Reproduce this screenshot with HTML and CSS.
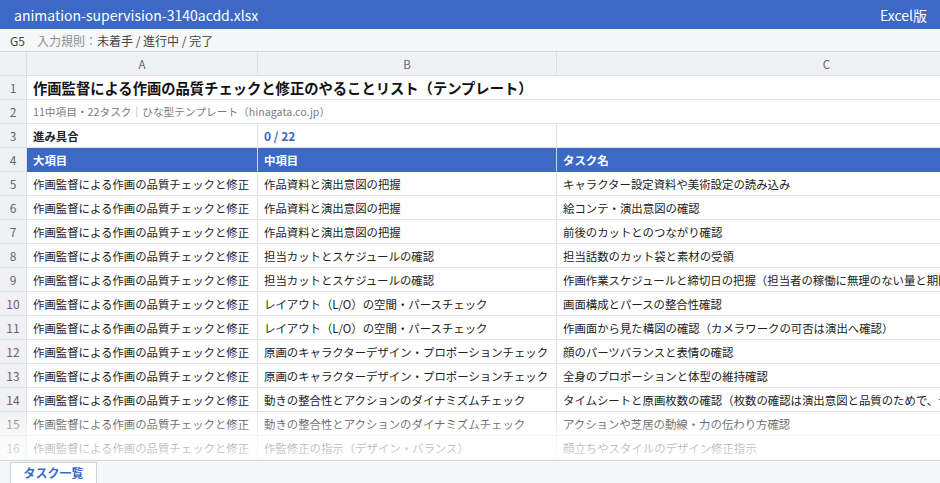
FILE: index.html
```html
<!DOCTYPE html>
<html lang="ja">
<head>
  <meta charset="UTF-8" />
  <title>animation-supervision-3140acdd.xlsx</title>
  <link rel="stylesheet" href="styles.css">
</head>
<body>
  <div class="app">
    <!-- Title bar -->
    <header class="topbar">
      <span class="file-name">animation-supervision-3140acdd.xlsx</span>
      <span class="edition">Excel版</span>
    </header>

    <!-- Formula bar -->
    <div class="formula-bar">
      <span class="cell-ref">G5</span>
      <span class="rule-label">入力規則：</span><span class="rule-value">未着手 / 進行中 / 完了</span>
    </div>

    <!-- Sheet -->
    <div class="sheet-wrap">
      <div class="sheet">
        <div class="corner"></div>
        <div class="col-head">A</div>
        <div class="col-head">B</div>
        <div class="col-head">C</div>

        <div class="row-num">1</div>
        <div class="cell title span-all">作画監督による作画の品質チェックと修正のやることリスト（テンプレート）</div>

        <div class="row-num">2</div>
        <div class="cell subtitle span-all">11中項目・22タスク｜ひな型テンプレート（hinagata.co.jp）</div>

        <div class="row-num">3</div>
        <div class="cell strong">進み具合</div>
        <div class="cell progress">0 / 22</div>
        <div class="cell"></div>

        <div class="row-num">4</div>
        <div class="cell head">大項目</div>
        <div class="cell head">中項目</div>
        <div class="cell head">タスク名</div>

        <div class="row-num">5</div>
        <div class="cell">作画監督による作画の品質チェックと修正</div>
        <div class="cell">作品資料と演出意図の把握</div>
        <div class="cell">キャラクター設定資料や美術設定の読み込み</div>

        <div class="row-num">6</div>
        <div class="cell">作画監督による作画の品質チェックと修正</div>
        <div class="cell">作品資料と演出意図の把握</div>
        <div class="cell">絵コンテ・演出意図の確認</div>

        <div class="row-num">7</div>
        <div class="cell">作画監督による作画の品質チェックと修正</div>
        <div class="cell">作品資料と演出意図の把握</div>
        <div class="cell">前後のカットとのつながり確認</div>

        <div class="row-num">8</div>
        <div class="cell">作画監督による作画の品質チェックと修正</div>
        <div class="cell">担当カットとスケジュールの確認</div>
        <div class="cell">担当話数のカット袋と素材の受領</div>

        <div class="row-num">9</div>
        <div class="cell">作画監督による作画の品質チェックと修正</div>
        <div class="cell">担当カットとスケジュールの確認</div>
        <div class="cell">作画作業スケジュールと締切日の把握（担当者の稼働に無理のない量と期間か確認）</div>

        <div class="row-num">10</div>
        <div class="cell">作画監督による作画の品質チェックと修正</div>
        <div class="cell">レイアウト（L/O）の空間・パースチェック</div>
        <div class="cell">画面構成とパースの整合性確認</div>

        <div class="row-num">11</div>
        <div class="cell">作画監督による作画の品質チェックと修正</div>
        <div class="cell">レイアウト（L/O）の空間・パースチェック</div>
        <div class="cell">作画面から見た構図の確認（カメラワークの可否は演出へ確認）</div>

        <div class="row-num">12</div>
        <div class="cell">作画監督による作画の品質チェックと修正</div>
        <div class="cell">原画のキャラクターデザイン・プロポーションチェック</div>
        <div class="cell">顔のパーツバランスと表情の確認</div>

        <div class="row-num">13</div>
        <div class="cell">作画監督による作画の品質チェックと修正</div>
        <div class="cell">原画のキャラクターデザイン・プロポーションチェック</div>
        <div class="cell">全身のプロポーションと体型の維持確認</div>

        <div class="row-num">14</div>
        <div class="cell">作画監督による作画の品質チェックと修正</div>
        <div class="cell">動きの整合性とアクションのダイナミズムチェック</div>
        <div class="cell">タイムシートと原画枚数の確認（枚数の確認は演出意図と品質のためで、予算判断は制作へ）</div>

        <div class="row-num">15</div>
        <div class="cell">作画監督による作画の品質チェックと修正</div>
        <div class="cell">動きの整合性とアクションのダイナミズムチェック</div>
        <div class="cell">アクションや芝居の動線・力の伝わり方確認</div>

        <div class="row-num">16</div>
        <div class="cell">作画監督による作画の品質チェックと修正</div>
        <div class="cell">作監修正の指示（デザイン・バランス）</div>
        <div class="cell">顔立ちやスタイルのデザイン修正指示</div>
      </div>
      <div class="fade"></div>
    </div>

    <!-- Sheet tabs -->
    <div class="tabbar">
      <div class="tab">タスク一覧</div>
    </div>
  </div>
</body>
</html>
```

FILE: styles.css
```css
* {
  box-sizing: border-box;
}
body {
  margin: 0;
  font-family: "Noto Sans CJK JP", "Noto Sans", sans-serif;
  color: #222;
  background: #fff;
}
.app {
  width: 940px;
  height: 483px;
  display: flex;
  flex-direction: column;
  overflow: hidden;
}
.topbar {
  height: 29px;
  flex: none;
  background: #3b69c5;
  color: #fff;
  display: flex;
  align-items: center;
  justify-content: space-between;
  padding: 0 13px 0 14px;
  font-size: 14px;
}
.formula-bar {
  height: 23px;
  flex: none;
  background: #f6f7f9;
  border-bottom: 1px solid #d3d6db;
  display: flex;
  align-items: center;
  padding-left: 10px;
  font-size: 12px;
  color: #444;
}
.cell-ref {
  width: 27px;
}
.rule-label {
  color: #8a8d93;
}
.sheet-wrap {
  flex: 1;
  position: relative;
  overflow: hidden;
}
.sheet {
  display: grid;
  grid-template-columns: 27px 231px 299px 540px;
  grid-auto-rows: 24px;
  width: 1097px;
}
.corner,
.col-head,
.row-num {
  background: #f0f1f4;
  border-right: 1px solid #dcdfe4;
  border-bottom: 1px solid #dcdfe4;
  color: #666;
  font-size: 12px;
  display: flex;
  align-items: center;
  justify-content: center;
}
.col-head {
  font-size: 11.5px;
}
.cell {
  border-right: 1px solid #e1e3e8;
  border-bottom: 1px solid #e1e3e8;
  padding: 0 6px 0 6px;
  font-size: 11.4px;
  display: flex;
  align-items: center;
  white-space: nowrap;
  overflow: hidden;
}
.span-all {
  grid-column: 2 / -1;
  border-right: none;
}
.title {
  font-size: 14.3px;
  font-weight: 700;
  color: #111;
}
.subtitle {
  font-size: 10.7px;
  color: #7a7d83;
}
.strong {
  font-weight: 700;
}
.progress {
  font-weight: 700;
  color: #3b69c5;
  font-size: 12px;
}
.cell.head {
  background: #3b69c5;
  color: #fff;
  font-weight: 700;
  border-right-color: #c9d5ee;
  border-bottom-color: #3b69c5;
}
.fade {
  position: absolute;
  left: 0;
  right: 0;
  bottom: 0;
  height: 50px;
  background: linear-gradient(rgba(255, 255, 255, 0) 0%, rgba(255, 255, 255, 0.5) 40%, rgba(255, 255, 255, 0.86) 100%);
  pointer-events: none;
}
.tabbar {
  height: 23px;
  flex: none;
  background: #f5f6f8;
  border-top: 1px solid #d3d6db;
  padding-left: 10px;
  display: flex;
  align-items: flex-start;
}
.tab {
  margin-top: 1px;
  width: 87px;
  height: 24px;
  background: #fff;
  border: 1px solid #cfd3da;
  color: #3b69c5;
  font-weight: 700;
  font-size: 12px;
  text-align: center;
  line-height: 20px;
}
```
